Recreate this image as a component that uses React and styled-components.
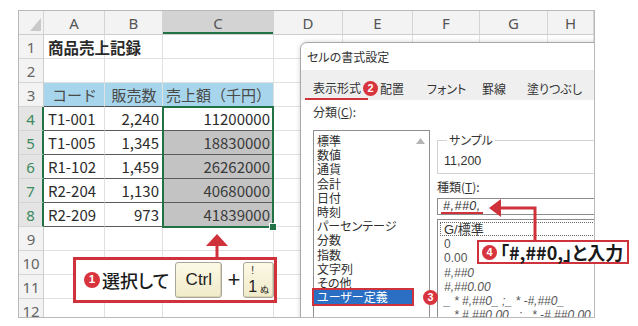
import React from "react";
import styled, { createGlobalStyle } from "styled-components";

const RED = "#d0323c";
const GREEN = "#217346";
const JP = `"Noto Sans CJK JP", "Noto Sans", sans-serif`;
const LATIN = `"Liberation Sans", "Noto Sans CJK JP", sans-serif`;

const GlobalStyle = createGlobalStyle`
  html, body {
    margin: 0;
    padding: 0;
    background: #fff;
  }
  body {
    font-family: ${JP};
  }
`;

const Stage = styled.div`
  position: relative;
  width: 638px;
  height: 326px;
  overflow: hidden;
  background: #fff;
`;

const Sheet = styled.div`
  position: relative;
  box-sizing: border-box;
  margin: 10px 0 0 18px;
  width: 577px;
  height: 308px;
  border: 1px solid #b9b9b9;
  overflow: hidden;
  display: grid;
  grid-template-columns: 25px 61px 58px 111px 69px 70px 67px 68px 1fr;
  grid-template-rows: repeat(13, 24px);
  font-family: ${JP};
`;

const HeadCell = styled.div`
  box-sizing: border-box;
  grid-row: 1;
  display: flex;
  align-items: center;
  justify-content: center;
  background: ${(p) => (p.$active ? "#d3d3d3" : "#f3f3f3")};
  border-right: 1px solid #d4d4d4;
  border-bottom: 1px solid #cdcdcd;
  box-shadow: ${(p) => (p.$active ? `inset 0 -2px 0 ${GREEN}` : "none")};
  font-family: "Noto Sans", ${LATIN};
  font-size: 15px;
  color: #555;
`;

const Corner = styled(HeadCell)`
  grid-column: 1;
  align-items: flex-end;
  justify-content: flex-end;
  padding: 0 2px 3px 0;
`;

const RowHead = styled.div`
  box-sizing: border-box;
  grid-column: 1;
  grid-row: ${(p) => p.$row};
  display: flex;
  align-items: center;
  justify-content: center;
  background: ${(p) => (p.$active ? "#e4e4e4" : "#f3f3f3")};
  border-right: ${(p) => (p.$active ? `2px solid ${GREEN}` : "1px solid #cdcdcd")};
  border-bottom: 1px solid #d4d4d4;
  font-family: "Noto Sans", ${LATIN};
  font-size: 15px;
  color: ${(p) => (p.$active ? "#3c8a5e" : "#666")};
`;

const Cell = styled.div`
  box-sizing: border-box;
  grid-row: ${(p) => p.$row};
  grid-column: ${(p) => p.$col};
  min-width: 0;
  display: flex;
  align-items: center;
  justify-content: ${(p) =>
    p.$align === "right" ? "flex-end" : p.$align === "center" ? "center" : "flex-start"};
  padding: 0 3px 0 4px;
  border-right: 1px solid #e0e0e0;
  border-bottom: 1px solid ${(p) => p.$line || "#e0e0e0"};
  background: ${(p) => p.$bg || "transparent"};
  font-size: ${(p) => (p.$big ? "15.5px" : "15px")};
  font-weight: ${(p) => (p.$bold ? 700 : 400)};
  color: ${(p) => p.$color || "#2b2b2b"};
  white-space: nowrap;
`;

const Selection = styled.div`
  position: relative;
  grid-column: 4;
  grid-row: 5 / 10;
  margin: -1px 0 -1px -1px;
  border: 2px solid ${GREEN};
  pointer-events: none;
  z-index: 1;
`;

const FillHandle = styled.span`
  position: absolute;
  right: -5px;
  bottom: -5px;
  width: 6px;
  height: 6px;
  background: ${GREEN};
  border: 1px solid #fff;
`;

/* dialog */
const Dialog = styled.div`
  position: absolute;
  left: 281px;
  top: 31px;
  width: 330px;
  height: 300px;
  box-sizing: border-box;
  display: flex;
  flex-direction: column;
  background: #fff;
  border: 1px solid #a9a9a9;
  border-top-left-radius: 7px;
  box-shadow: 0 0 5px rgba(0, 0, 0, 0.18);
  z-index: 2;
  font-family: ${JP};
  font-feature-settings: "palt";
  font-size: 12px;
  color: #2a2a2a;
`;

const TitleBar = styled.div`
  flex-shrink: 0;
  height: 27px;
  display: flex;
  align-items: center;
  padding-left: 6px;
  font-size: 12px;
  color: #333;
`;

const TabStrip = styled.div`
  flex-shrink: 0;
  height: 30px;
  display: flex;
  align-items: flex-end;
  padding-left: 4px;
  background: #efefef;
`;

const Tab = styled.div`
  box-sizing: border-box;
  width: ${(p) => p.$w}px;
  height: 22px;
  display: flex;
  align-items: flex-start;
  padding-top: 2px;
  color: #333;
`;

const TabLabel = styled.span`
  padding: 0 7px 3px 8px;
  border-bottom: 2px solid ${(p) => (p.$current ? RED : "transparent")};
  line-height: 15px;
`;

const Body = styled.div`
  flex: 1;
  display: flex;
  padding: 4px 0 0 12px;
`;

const LeftCol = styled.div`
  width: 117px;
  display: flex;
  flex-direction: column;
`;

const Label = styled.div`
  height: 16px;
  line-height: 16px;
  margin-bottom: ${(p) => p.$mb || 0}px;
  margin-top: ${(p) => p.$mt || 0}px;
  color: #333;
  u {
    text-decoration: underline;
    text-underline-offset: 1px;
  }
`;

const ListBox = styled.div`
  box-sizing: border-box;
  height: 200px;
  display: flex;
  border: 1px solid #8f8f8f;
`;

const ListItems = styled.div`
  flex: 1;
  padding-top: 3px;
`;

const ListItem = styled.div`
  height: 14.2px;
  line-height: 14.2px;
  padding-left: 3px;
  white-space: nowrap;
  color: ${(p) => (p.$selected ? "#fff" : "#2e2e2e")};
  background: ${(p) => (p.$selected ? "#2a6fc4" : "transparent")};
  outline: ${(p) => (p.$selected ? `2px solid ${RED}` : "none")};
  font-size: 12px;
`;

const ScrollBar = styled.div`
  width: 17px;
  display: flex;
  justify-content: center;
  padding-top: 7px;
`;

const RightCol = styled.div`
  flex: 1;
  min-width: 0;
  margin-left: 7px;
  display: flex;
  flex-direction: column;
`;

const Group = styled.fieldset`
  margin: 29px 0 0 0;
  padding: 0 0 5px 6px;
  border: 1px solid #d3d3d3;
  border-right: none;
  min-width: 0;
`;

const Legend = styled.legend`
  margin-left: 3px;
  padding: 0 2px;
  line-height: 14px;
  font-size: 12px;
  color: #333;
`;

const SampleText = styled.div`
  margin-top: 7px;
  line-height: 14px;
  font-family: ${LATIN};
  font-size: 12.5px;
  color: #333;
`;

const Input = styled.div`
  box-sizing: border-box;
  margin-top: 3px;
  height: 17px;
  border: 1px solid #8c8c8c;
  border-right: none;
  padding-left: 3px;
  display: flex;
  align-items: center;
`;

const Typed = styled.span`
  font-family: ${LATIN};
  font-style: italic;
  font-size: 12.5px;
  line-height: 12px;
  letter-spacing: 0.5px;
  color: #333;
  padding: 0 2px;
  border-bottom: 2px solid ${RED};
`;

const FormatList = styled.div`
  box-sizing: border-box;
  margin-top: 4px;
  flex: 1;
  border: 1px solid #8c8c8c;
  border-right: none;
  padding-top: 2px;
`;

const FormatItem = styled.div`
  height: 14.2px;
  line-height: 14.2px;
  padding-left: 3px;
  margin-left: 2px;
  white-space: nowrap;
  box-sizing: border-box;
  border: 1px dotted ${(p) => (p.$focus ? "#666" : "transparent")};
  border-right: none;
  font-family: ${LATIN};
  font-size: ${(p) => (p.$focus ? "13px" : "12px")};
  font-style: ${(p) => (p.$hash ? "italic" : "normal")};
  color: ${(p) => (p.$focus ? "#333" : "#555")};
`;

/* annotations */
const NumBadge = styled.span`
  flex-shrink: 0;
  display: inline-flex;
  align-items: center;
  justify-content: center;
  width: ${(p) => p.$size || 15}px;
  height: ${(p) => p.$size || 15}px;
  border-radius: 50%;
  background: #d8343d;
  color: #fff;
  font-family: ${LATIN};
  font-weight: 700;
  font-size: ${(p) => ((p.$size || 15) * 0.72).toFixed(1)}px;
  line-height: 1;
`;

const Pin = styled.div`
  position: absolute;
  left: ${(p) => p.$x}px;
  top: ${(p) => p.$y}px;
  z-index: 5;
  display: flex;
`;

const Arrows = styled.svg`
  position: absolute;
  left: 0;
  top: 0;
  z-index: 4;
  pointer-events: none;
`;

const Callout = styled.div`
  position: absolute;
  left: ${(p) => p.$x}px;
  top: ${(p) => p.$y}px;
  width: ${(p) => p.$w}px;
  height: ${(p) => p.$h}px;
  box-sizing: border-box;
  display: flex;
  align-items: center;
  gap: ${(p) => p.$gap || 0}px;
  padding-left: ${(p) => p.$pl || 0}px;
  background: #fff;
  border: ${(p) => p.$bw || 3}px solid ${RED};
  z-index: 5;
  font-family: ${JP};
  font-feature-settings: "palt";
  color: #1a1a1a;
`;

const CalloutText = styled.span`
  font-size: ${(p) => p.$size}px;
  font-weight: ${(p) => p.$weight || 500};
  white-space: nowrap;
  margin-left: ${(p) => p.$ml || 0}px;
`;

const Key = styled.div`
  box-sizing: border-box;
  width: ${(p) => p.$w}px;
  height: 36px;
  display: flex;
  align-items: center;
  justify-content: center;
  margin-left: ${(p) => p.$ml || 0}px;
  background: linear-gradient(#fcf9e6, #f1ebc9);
  border: 1px solid #a9a69a;
  border-radius: 3px;
  box-shadow: inset -1px -1px 0 #d9d3b3;
  font-family: ${LATIN};
  font-size: 17px;
  color: #222;
`;

const KeyGrid = styled.div`
  display: grid;
  grid-template-columns: auto auto;
  column-gap: 3px;
  align-items: end;
  font-family: ${LATIN};
  line-height: 1;
`;

const KeyTop = styled.span`
  font-size: 10px;
  text-align: center;
  padding-bottom: 3px;
`;

const KeyMain = styled.span`
  font-size: 16px;
`;

const KeyKana = styled.span`
  font-family: ${JP};
  font-size: 9px;
  padding-bottom: 1px;
`;

const Plus = styled.span`
  font-family: ${LATIN};
  font-size: 22px;
  margin: 0 3px 0 5px;
  color: #222;
`;

const COLS = ["A", "B", "C", "D", "E", "F", "G", "H"];

const table = {
  4: ["T1-001", "2,240", "11200000"],
  5: ["T1-005", "1,345", "18830000"],
  6: ["R1-102", "1,459", "26262000"],
  7: ["R2-204", "1,130", "40680000"],
  8: ["R2-209", "973", "41839000"],
};

const categories = [
  "標準",
  "数値",
  "通貨",
  "会計",
  "日付",
  "時刻",
  "パーセンテージ",
  "分数",
  "指数",
  "文字列",
  "その他",
  "ユーザー定義",
];

const formats = [
  "G/標準",
  "0",
  "0.00",
  "#,##0",
  "#,##0.00",
  "_ * #,##0_ ;_ * -#,##0_",
  "_ * #,##0.00_ ;_ * -#,##0.00_",
];

const tabs = [
  { label: "配置", w: 47 },
  { label: "フォント", w: 55 },
  { label: "罫線", w: 45 },
  { label: "塗りつぶし", w: 70 },
];

function renderCell(r, c) {
  const pos = { key: `${r}-${c}`, $row: r + 1, $col: c + 2 };
  if (r === 1 && c === 0) {
    return (
      <Cell {...pos} $bold $big>
        商品売上記録
      </Cell>
    );
  }
  if (r === 3 && c < 3) {
    const heads = ["コード", "販売数", "売上額（千円）"];
    return (
      <Cell {...pos} $bg="#a7d6ec" $align="center" $line="#4f4f4f" $color="#4a4a4a">
        {heads[c]}
      </Cell>
    );
  }
  if (table[r] && c < 3) {
    const gray = c === 2 && r > 4;
    return (
      <Cell
        {...pos}
        $align={c === 0 ? "left" : "right"}
        $line="#5a5a5a"
        $bg={gray ? "#c3c3c3" : undefined}
        $color={gray ? "#3a3a3a" : undefined}
      >
        {table[r][c]}
      </Cell>
    );
  }
  return <Cell {...pos} />;
}

export default function App() {
  const sheetRows = Array.from({ length: 12 }, (_, i) => i + 1);

  return (
    <Stage>
      <GlobalStyle />
      <Sheet>
        <Corner>
          <svg width="11" height="13" viewBox="0 0 11 13">
            <path d="M11 0 L11 13 L0 13 Z" fill="#c9c9c9" />
          </svg>
        </Corner>
        {COLS.map((c) => (
          <HeadCell key={c} $active={c === "C"}>
            {c}
          </HeadCell>
        ))}
        {sheetRows.map((r) => (
          <React.Fragment key={r}>
            <RowHead $row={r + 1} $active={r >= 4 && r <= 8}>
              {r}
            </RowHead>
            {COLS.map((_, c) => renderCell(r, c))}
          </React.Fragment>
        ))}
        <Selection>
          <FillHandle />
        </Selection>

        <Dialog>
          <TitleBar>セルの書式設定</TitleBar>
          <TabStrip>
            <Tab $w={75}>
              <TabLabel $current>表示形式</TabLabel>
            </Tab>
            {tabs.map((t) => (
              <Tab key={t.label} $w={t.w}>
                {t.label}
              </Tab>
            ))}
          </TabStrip>
          <Body>
            <LeftCol>
              <Label $mb={10}>
                分類(<u>C</u>):
              </Label>
              <ListBox>
                <ListItems>
                  {categories.map((c) => (
                    <ListItem key={c} $selected={c === "ユーザー定義"}>
                      {c}
                    </ListItem>
                  ))}
                </ListItems>
                <ScrollBar>
                  <svg width="9" height="6" viewBox="0 0 9 6">
                    <path d="M4.5 0 L9 6 L0 6 Z" fill="#b5b5b5" />
                  </svg>
                </ScrollBar>
              </ListBox>
            </LeftCol>
            <RightCol>
              <Group>
                <Legend>サンプル</Legend>
                <SampleText>11,200</SampleText>
              </Group>
              <Label $mt={5}>
                種類(<u>T</u>):
              </Label>
              <Input>
                <Typed>#,##0,</Typed>
              </Input>
              <FormatList>
                {formats.map((f, i) => (
                  <FormatItem key={f} $focus={i === 0} $hash={f.includes("#")}>
                    {f}
                  </FormatItem>
                ))}
              </FormatList>
            </RightCol>
          </Body>
        </Dialog>
      </Sheet>

      <Pin $x={363} $y={81}>
        <NumBadge>2</NumBadge>
      </Pin>
      <Pin $x={423} $y={290}>
        <NumBadge>3</NumBadge>
      </Pin>

      <Arrows width="638" height="326" viewBox="0 0 638 326">
        <path d="M217 244 L217 258" stroke="#d0323c" strokeWidth="3" fill="none" />
        <path d="M217 234 L228 246 L206 246 Z" fill="#d0323c" />
        <path d="M535 241 L535 208 L498 208" stroke="#d0323c" strokeWidth="3" fill="none" />
        <path d="M489 208 L501 199 L501 217 Z" fill="#d0323c" />
      </Arrows>

      <Callout $x={73} $y={257} $w={204} $h={46} $pl={8}>
        <NumBadge $size={16}>1</NumBadge>
        <CalloutText $size={18} $ml={2}>
          選択して
        </CalloutText>
        <Key $w={54} $ml={6}>
          Ctrl
        </Key>
        <Plus>+</Plus>
        <Key $w={35}>
          <KeyGrid>
            <KeyTop>!</KeyTop>
            <span />
            <KeyMain>1</KeyMain>
            <KeyKana>ぬ</KeyKana>
          </KeyGrid>
        </Key>
      </Callout>

      <Callout $x={477} $y={240} $w={152} $h={24} $pl={3} $gap={3} $bw={2}>
        <NumBadge $size={15}>4</NumBadge>
        <CalloutText $size={18} $weight={700}>
          「#,##0,」と入力
        </CalloutText>
      </Callout>
    </Stage>
  );
}
